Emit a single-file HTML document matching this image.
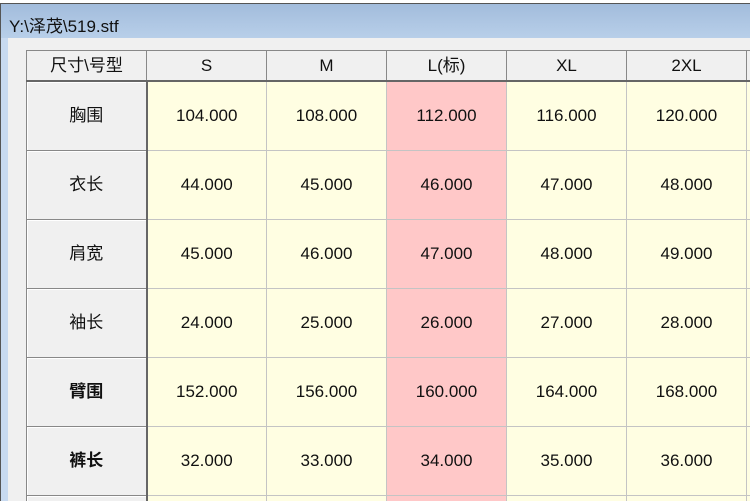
<!DOCTYPE html>
<html><head><meta charset="utf-8"><style>
html,body{margin:0;width:750px;height:501px;overflow:hidden}
body{background:#fff;font-family:"Liberation Sans","Noto Sans CJK SC",sans-serif;position:relative}
#win{position:absolute;left:0;top:3px;width:749px;height:497px;overflow:hidden;border-top:1px solid #555;border-left:1px solid #555;background:linear-gradient(#a2bcdc,#b8cfe9 34px,#c8daf0 34px)}
#title{position:absolute;left:8px;top:8px;font-size:17px;color:#111}
#client{position:absolute;left:7px;top:34px;width:750px;height:470px;background:#f0f0f0;overflow:hidden}
table{position:absolute;left:18px;top:12px;border-collapse:collapse;table-layout:fixed;width:840px}
td{height:68px;text-align:center;font-size:17px;line-height:20px;color:#111;border:1px solid #c4c4c4;background:#fffee2;padding:0;overflow:hidden;white-space:nowrap}
tr.h td{height:29px;background:#f0f0f0;border:1px solid #888;border-bottom:2px solid #666}
td.r{background:#f0f0f0;border:1px solid #888;border-right:2px solid #666;box-shadow:inset 1px 1px 0 #fff}
td.p{background:#ffc8c8}
td.b{font-weight:bold}
</style></head><body>
<div id="win"><div id="title">Y:\泽茂\519.stf</div>
<div id="client">
<table>
<colgroup><col style="width:120px"><col style="width:120px"><col style="width:120px"><col style="width:120px"><col style="width:120px"><col style="width:120px"><col style="width:120px"></colgroup>
<tr class="h"><td>尺寸\号型</td><td>S</td><td>M</td><td>L(标)</td><td>XL</td><td>2XL</td><td></td></tr>
<tr><td class="r">胸围</td><td>104.000</td><td>108.000</td><td class="p">112.000</td><td>116.000</td><td>120.000</td><td></td></tr>
<tr><td class="r">衣长</td><td>44.000</td><td>45.000</td><td class="p">46.000</td><td>47.000</td><td>48.000</td><td></td></tr>
<tr><td class="r">肩宽</td><td>45.000</td><td>46.000</td><td class="p">47.000</td><td>48.000</td><td>49.000</td><td></td></tr>
<tr><td class="r">袖长</td><td>24.000</td><td>25.000</td><td class="p">26.000</td><td>27.000</td><td>28.000</td><td></td></tr>
<tr><td class="r b">臂围</td><td>152.000</td><td>156.000</td><td class="p">160.000</td><td>164.000</td><td>168.000</td><td></td></tr>
<tr><td class="r b">裤长</td><td>32.000</td><td>33.000</td><td class="p">34.000</td><td>35.000</td><td>36.000</td><td></td></tr>
<tr><td class="r"></td><td></td><td></td><td class="p"></td><td></td><td></td><td></td></tr>
</table>
</div></div>
</body></html>
